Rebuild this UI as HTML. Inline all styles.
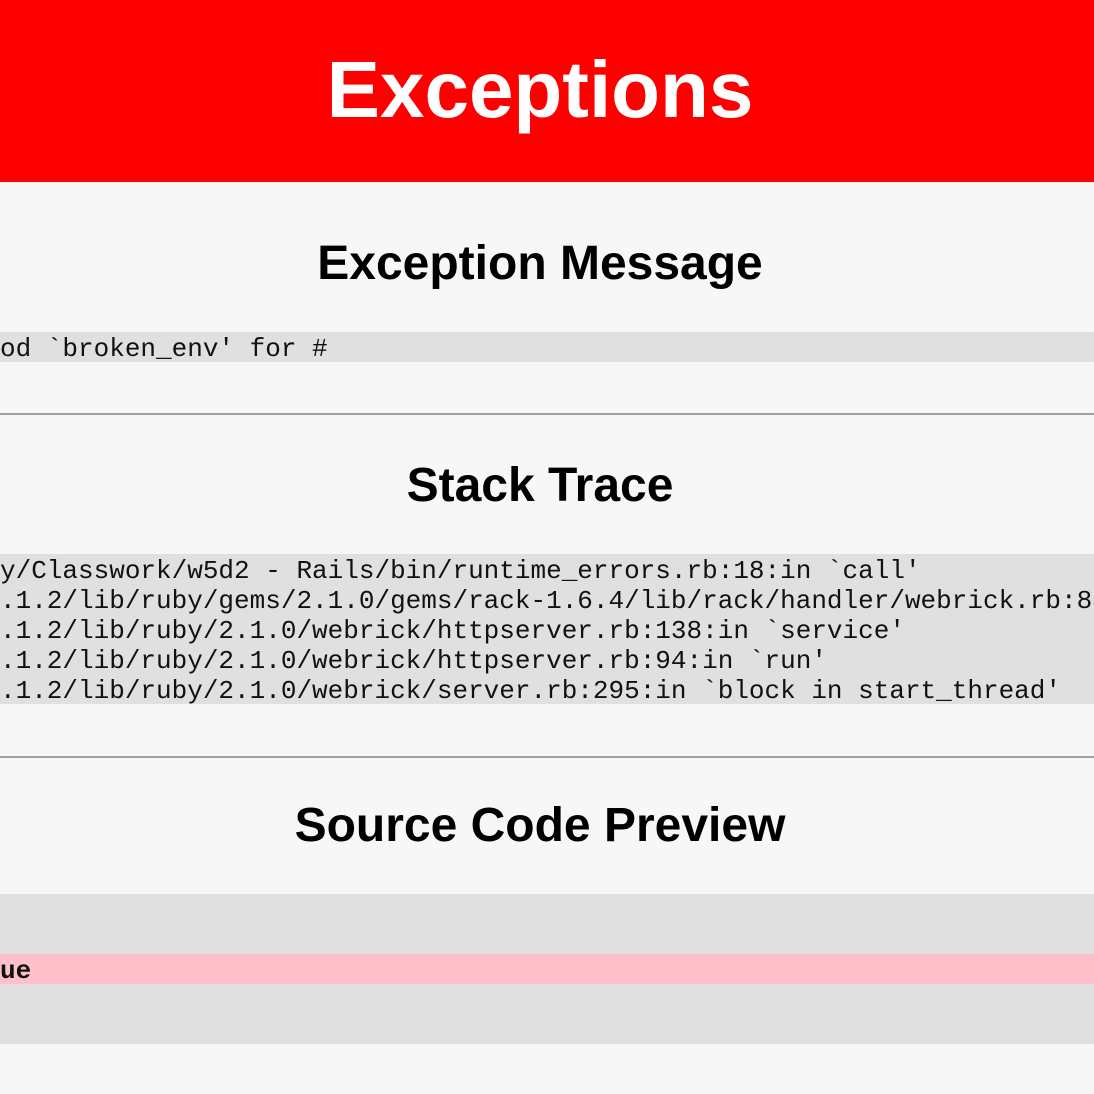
<!DOCTYPE html>
<html><head><meta charset="utf-8"><style>
html,body{margin:0;padding:0;background:#f7f7f7;width:1094px;height:1094px;overflow:hidden}
body{font-family:"Liberation Sans",Arial,sans-serif;position:relative}
.hdr{position:absolute;left:0;top:0;width:1094px;height:182px;background:#ff0000}
.hdr h1{position:absolute;left:0;width:1080px;top:40px;margin:0;text-align:center;color:#fff;font-size:80px;line-height:100px;font-weight:bold}
h2{position:absolute;left:0;width:1080px;margin:0;text-align:center;font-size:48px;line-height:60px;font-weight:bold;color:#000}
.blk{position:absolute;left:0;width:1094px;background:#e0e0e0;font-family:"Liberation Mono","Courier New",monospace;font-size:26px;line-height:30px;white-space:pre;color:#111;overflow:hidden}
.blk div{height:30px;margin-left:0;position:relative;top:2px}
hr{position:absolute;left:0;width:1094px;margin:0;border:0;height:2px;background:#a0a0a0}
.pink{background:#ffc0cb;font-weight:bold}
.blk div.pink{top:0;padding-top:2px;height:28px}
</style></head><body>
<div class="hdr"><h1>Exceptions</h1></div>
<h2 style="top:234px">Exception Message</h2>
<div class="blk" style="top:332px;height:30px"><div>od `broken_env' for #</div></div>
<hr style="top:413px">
<h2 style="top:456px">Stack Trace</h2>
<div class="blk" style="top:554px;height:150px"><div>y/Classwork/w5d2 - Rails/bin/runtime_errors.rb:18:in `call'</div><div>.1.2/lib/ruby/gems/2.1.0/gems/rack-1.6.4/lib/rack/handler/webrick.rb:88:in `service'</div><div>.1.2/lib/ruby/2.1.0/webrick/httpserver.rb:138:in `service'</div><div>.1.2/lib/ruby/2.1.0/webrick/httpserver.rb:94:in `run'</div><div>.1.2/lib/ruby/2.1.0/webrick/server.rb:295:in `block in start_thread'</div></div>
<hr style="top:756px">
<h2 style="top:796px">Source Code Preview</h2>
<div class="blk" style="top:894px;height:150px"><div></div><div></div><div class="pink">ue</div><div></div><div></div></div>
</body></html>
